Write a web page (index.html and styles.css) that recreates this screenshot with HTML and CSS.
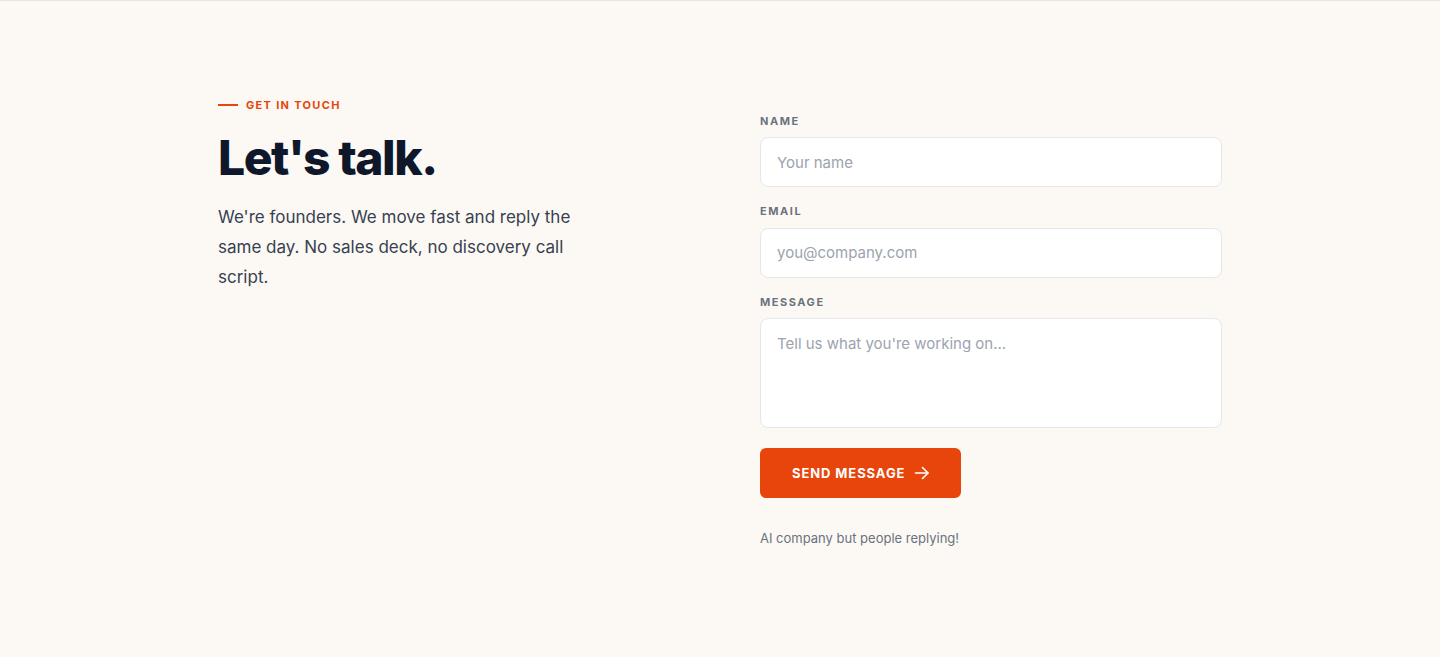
FILE: index.html
```html
<!DOCTYPE html>
<html lang="en">
<head>
<meta charset="utf-8">
<title>Contact</title>
<link rel="stylesheet" href="styles.css">
</head>
<body>
<main class="contact">
  <div class="contact-inner">
    <section class="intro">
      <div class="eyebrow"><span class="eyebrow-line"></span>GET IN TOUCH</div>
      <h1 class="title">Let's talk.</h1>
      <p class="lead">We're founders. We move fast and reply the same day. No sales deck, no discovery call script.</p>
    </section>
    <form class="form">
      <label class="field">
        <span class="label">NAME</span>
        <input class="input" type="text" placeholder="Your name">
      </label>
      <label class="field">
        <span class="label">EMAIL</span>
        <input class="input" type="email" placeholder="you@company.com">
      </label>
      <label class="field">
        <span class="label">MESSAGE</span>
        <textarea class="input textarea" placeholder="Tell us what you're working on..."></textarea>
      </label>
      <button class="submit" type="button">SEND MESSAGE
        <svg width="16" height="16" viewBox="0 0 16 16" fill="none" stroke="currentColor" stroke-width="1.6" stroke-linecap="round" stroke-linejoin="round"><path d="M1.5 8h12.5"/><path d="M8.5 2.5l5.5 5.5-5.5 5.5"/></svg>
      </button>
      <p class="note">AI company but people replying!</p>
    </form>
  </div>
</main>
</body>
</html>
```
FILE: styles.css
```css
* { box-sizing: border-box; }
html, body { margin: 0; padding: 0; }
body {
  background: #fcf9f4;
  font-family: Inter, "Noto Sans", sans-serif;
  color: #0f172a;
  border-top: 1px solid #e5e5e5;
  min-height: 657px;
}
.contact { padding: 97px 0 80px; }
.contact-inner {
  width: 1004px;
  margin: 0 auto;
  display: grid;
  grid-template-columns: 1fr 1fr;
  column-gap: 80px;
  align-items: start;
}
.eyebrow {
  display: flex;
  align-items: center;
  gap: 8px;
  font-size: 11px;
  font-weight: 700;
  letter-spacing: 0.12em;
  color: #e8450c;
  line-height: 14px;
}
.eyebrow-line { width: 20px; height: 2px; background: #e8450c; display: block; }
.title {
  margin: 18px 0 0;
  font-size: 48px;
  line-height: 56px;
  font-weight: 800;
  letter-spacing: -0.03em;
  color: #0f172a;
}
.lead {
  margin: 16px 0 0;
  max-width: 370px;
  font-size: 17px;
  line-height: 30px;
  color: #374151;
}
.form { display: flex; flex-direction: column; gap: 16px; margin-top: 14.5px; }
.field { display: flex; flex-direction: column; gap: 8px; }
.label {
  font-size: 11px;
  line-height: 16.5px;
  font-weight: 700;
  letter-spacing: 0.14em;
  color: #6b7280;
}
.input {
  height: 50px;
  width: 100%;
  border: 1px solid #e5e7eb;
  border-radius: 8px;
  background: #fff;
  padding: 0 16px;
  font-family: inherit;
  font-size: 15px;
  color: #111827;
  outline: none;
}
.input::placeholder { color: #9ca3af; }
.textarea { height: 110px; padding: 14px 16px; resize: none; line-height: 22px; }
.submit {
  margin-top: 4px;
  align-self: flex-start;
  display: flex;
  align-items: center;
  gap: 9px;
  height: 50px;
  padding: 0 31px 0 32px;
  border: none;
  border-radius: 6px;
  background: #e8450c;
  color: #fff;
  font-family: inherit;
  font-size: 13px;
  font-weight: 700;
  letter-spacing: 0.07em;
}
.note {
  margin: 14px 0 0;
  font-size: 13px;
  line-height: 20px;
  color: #6b7280;
}
```
